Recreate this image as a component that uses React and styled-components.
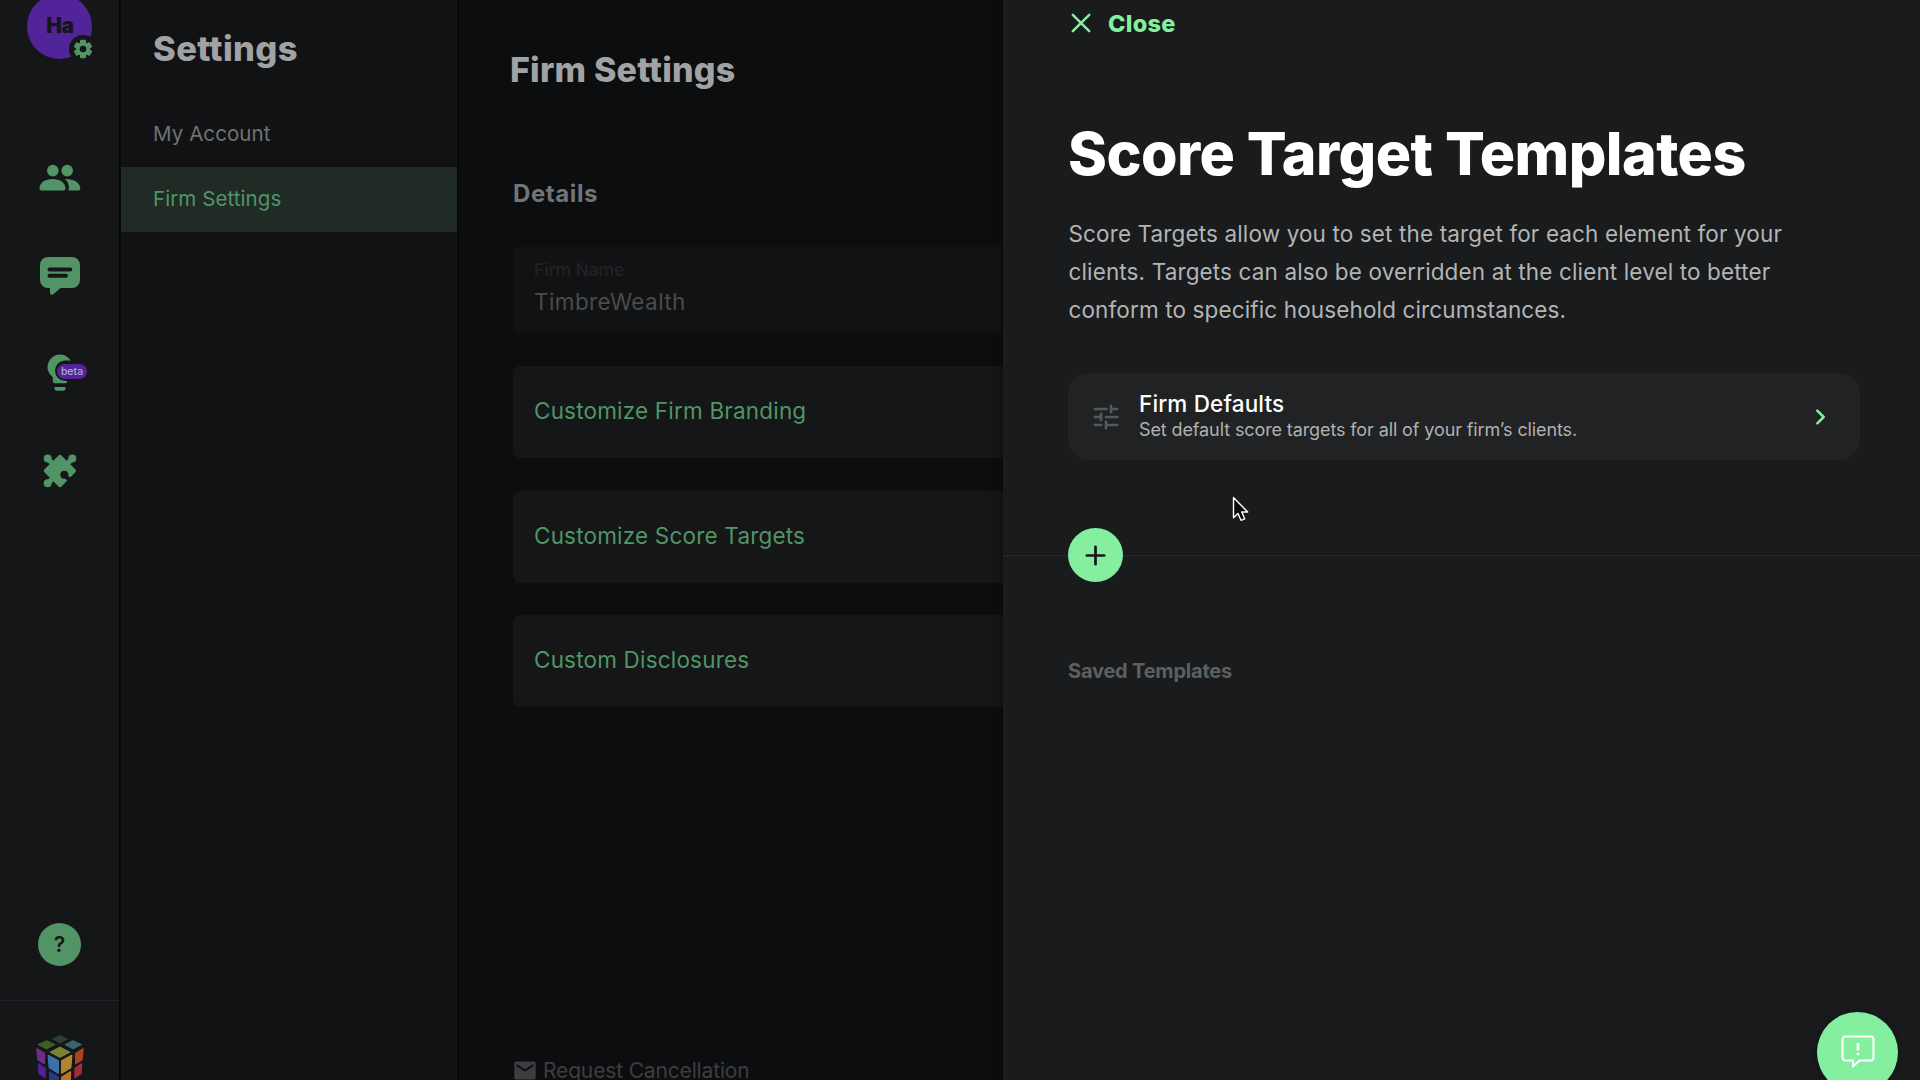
import React from "react";
import styled, { createGlobalStyle } from "styled-components";

const navLinks = [
  { label: "My Account", active: false },
  { label: "Firm Settings", active: true }
];

const firmOptions = [
  "Customize Firm Branding",
  "Customize Score Targets",
  "Custom Disclosures"
];

const gearTeeth = [0, 60, 120, 180, 240, 300];

const GearIcon = () => (
  <svg width="20" height="20" viewBox="0 0 20 20">
    <g fill="#529466">
      <circle cx="10" cy="10" r="7" />
      {gearTeeth.map(angle => (
        <rect key={angle} x="7" y="0.8" width="6" height="5" rx="1.2" transform={`rotate(${angle} 10 10)`} />
      ))}
    </g>
    <circle cx="10" cy="10" r="3.3" fill="#151618" />
  </svg>
);

const PeopleIcon = () => (
  <svg width="42" height="28" viewBox="0 0 42 28" fill="#529466">
    <circle cx="13.8" cy="6.6" r="5.8" />
    <circle cx="28.2" cy="6.6" r="5.8" />
    <path d="M0.5 24.5c0-6 5.5-9.6 13-9.6s13 3.6 13 9.6c0 1.3-.7 2-2 2h-22c-1.3 0-2-.7-2-2z" />
    <path d="M26 15c8-.4 15.3 3.2 15.3 9.5 0 1.3-.7 2-2 2h-10.2c.6-.6.8-1.2.8-2 0-4-1.2-7.2-3.9-9.5z" />
  </svg>
);

const ChatIcon = () => (
  <svg width="40" height="39" viewBox="0 -1 40 39">
    <path
      d="M8 0h24a8 8 0 0 1 8 8v15a8 8 0 0 1-8 8H20.5l-7.2 6.3c-1.3 1.1-3.3.4-3.3-1.5V31H8a8 8 0 0 1-8-8V8a8 8 0 0 1 8-8z"
      fill="#529466"
    />
    <path d="M9.5 12.5h20.8M9.5 18.7h16.5" stroke="#151618" strokeWidth="4" strokeLinecap="round" />
  </svg>
);

const BulbIcon = () => (
  <svg width="28" height="38" viewBox="0 0 28 38">
    <path
      d="M14 0.5a12.5 12.5 0 0 0-7.2 22.7v4a2 2 0 0 0 2 2h10.5a2 2 0 0 0 2-2v-4A12.5 12.5 0 0 0 14 0.5z"
      fill="#529466"
    />
    <path d="M8.5 33h11v1.3a2.5 2.5 0 0 1-2.5 2.5h-6a2.5 2.5 0 0 1-2.5-2.5z" fill="#529466" />
    <rect x="9" y="6.5" width="30" height="20.5" rx="10.2" fill="#151618" />
  </svg>
);

const PuzzleIcon = () => (
  <svg width="34" height="34" viewBox="0 0 34 34">
    <g fill="#529466">
      <path d="M15.6 1.4a2 2 0 0 1 2.8 0l13.7 13.7a2.5 2.5 0 0 1 0 3.5L18.7 32.2a2.5 2.5 0 0 1-3.5 0L1.7 18.6a2.5 2.5 0 0 1 0-3.5z" />
      <circle cx="4.7" cy="4.6" r="4" />
      <circle cx="29.3" cy="4.6" r="4" />
      <circle cx="4.7" cy="29.3" r="4" />
    </g>
    <path d="M5 5l6 6M29 5l-6 6M5 29l6-6" stroke="#529466" strokeWidth="5" />
    <circle cx="21.3" cy="20.8" r="4" fill="#151618" />
    <path d="M22.5 22l4.5 4.5" stroke="#151618" strokeWidth="4" />
  </svg>
);

const CubeIcon = () => (
  <svg width="50" height="52" viewBox="0 0 50 52" strokeWidth="1.5" strokeLinejoin="round">
    <path d="M25 1l7 3.2-7 3.5-7-3.5z" fill="#27422f" stroke="#27422f" />
    <path d="M12 6l7.5 3.6-8 3.9-8-3.9z" fill="#3c5e27" stroke="#3c5e27" />
    <path d="M38 6l8 3.6-8 3.9-7.5-3.9z" fill="#3d6270" stroke="#3d6270" />
    <path d="M25 12.5l9.5 4.7-9.5 5-9.5-5z" fill="#778330" stroke="#778330" />
    <path d="M2 14l7.3 4.5v10L3 24.5z" fill="#712d8a" stroke="#712d8a" />
    <path d="M13.3 20.5l10 5.5v12l-9-5.5z" fill="#3d70aa" stroke="#3d70aa" />
    <path d="M48 14l-7.3 4.5v10l6.3-4z" fill="#a8461e" stroke="#a8461e" />
    <path d="M36.7 20.5l-10 5.5v12l9-5.5z" fill="#b58431" stroke="#b58431" />
    <path d="M3.5 29l6.5 4.3v9.2l-6-4z" fill="#4e209b" stroke="#4e209b" />
    <path d="M46.5 29l-6.5 4.3v9.2l6-4z" fill="#a02d3a" stroke="#a02d3a" />
    <path d="M14.5 37l8.8 5.5V52h-8z" fill="#253a82" stroke="#253a82" />
    <path d="M35.5 37l-8.8 5.5V52h8z" fill="#b9752a" stroke="#b9752a" />
  </svg>
);

const MailIcon = () => (
  <svg width="22" height="19" viewBox="0 0 22 19">
    <rect x="0.3" y="0.5" width="21.4" height="18" rx="2" fill="#3d3e41" />
    <path d="M2.5 4l8.5 5.5L19.5 4" fill="none" stroke="#0c0d0f" strokeWidth="2" />
  </svg>
);

const CloseIcon = () => (
  <svg width="20" height="20" viewBox="0 0 20 20">
    <path d="M1.8 1.8l16.4 16.4M18.2 1.8L1.8 18.2" stroke="#83ef9f" strokeWidth="2.5" strokeLinecap="round" />
  </svg>
);

const TuneIcon = () => (
  <svg width="26" height="26" viewBox="0 0 26 26" fill="none" stroke="#56595b" strokeWidth="2.7" strokeLinecap="round">
    <path d="M2 5h11.5M18 1.8v6.4M18 5h6.3M2 13h5.5M8 9.8v6.4M13 13h11.3M2 21h6.3M13 17.8v6.4M13 21h11.3" />
  </svg>
);

const ChevronIcon = () => (
  <svg width="12" height="18" viewBox="0 0 12 18">
    <path d="M2.3 2.7L8.7 9l-6.4 6.3" fill="none" stroke="#83ef9f" strokeWidth="2.5" strokeLinecap="round" strokeLinejoin="round" />
  </svg>
);

const PlusIcon = () => (
  <svg width="21" height="21" viewBox="0 0 21 21">
    <path d="M10.5 1.8v17.4M1.8 10.5h17.4" stroke="#151618" strokeWidth="2.7" strokeLinecap="round" />
  </svg>
);

const FeedbackIcon = () => (
  <svg width="34" height="34" viewBox="0 0 34 34" stroke="#fff" strokeWidth="2" strokeLinejoin="round">
    <path d="M4.5 1.5h25a3 3 0 0 1 3 3v18a3 3 0 0 1-3 3H18.5l-6.5 6v-6H4.5a3 3 0 0 1-3-3v-18a3 3 0 0 1 3-3z" fill="none" />
    <path d="M17 8v7.5M17 17.8v2.4" fill="none" strokeWidth="2.7" />
  </svg>
);

const CursorIcon = () => (
  <svg width="18" height="28" viewBox="0 0 18 28">
    <path
      d="M1.5 1.5v20.3l4.5-4.3 3 6.8 3.7-1.5-3-6.8h6z"
      fill="#0a0a0a"
      stroke="#fff"
      strokeWidth="1.4"
      strokeLinejoin="round"
    />
  </svg>
);

export default function App() {
  return (
    <Page>
      <GlobalStyle />
      <Rail>
        <Avatar>
          Ha
          <AvatarGear>
            <GearIcon />
          </AvatarGear>
        </Avatar>
        <RailNav>
          <RailItem>
            <PeopleIcon />
          </RailItem>
          <RailItem>
            <ChatIcon />
          </RailItem>
          <RailItem>
            <BulbIcon />
            <BetaBadge>beta</BetaBadge>
          </RailItem>
          <RailItem>
            <PuzzleIcon />
          </RailItem>
        </RailNav>
        <HelpButton>?</HelpButton>
        <RailFooter>
          <CubeIcon />
        </RailFooter>
      </Rail>

      <Sidebar>
        <SidebarTitle>Settings</SidebarTitle>
        {navLinks.map(link => (
          <SidebarLink key={link.label} $active={link.active}>
            {link.label}
          </SidebarLink>
        ))}
      </Sidebar>

      <Main>
        <MainTitle>Firm Settings</MainTitle>
        <SectionTitle>Details</SectionTitle>
        <Options>
          <NameField>
            <FieldLabel>Firm Name</FieldLabel>
            <FieldValue>TimbreWealth</FieldValue>
          </NameField>
          {firmOptions.map(option => (
            <OptionCard key={option}>{option}</OptionCard>
          ))}
        </Options>
        <CancelLink>
          <MailIcon />
          Request Cancellation
        </CancelLink>
      </Main>

      <Drawer>
        <CloseButton>
          <CloseIcon />
          Close
        </CloseButton>
        <DrawerTitle>Score Target Templates</DrawerTitle>
        <Description>
          Score Targets allow you to set the target for each element for your
          <br />
          clients. Targets can also be overridden at the client level to better
          <br />
          conform to specific household circumstances.
        </Description>
        <DefaultsCard>
          <TuneIcon />
          <DefaultsText>
            <DefaultsTitle>Firm Defaults</DefaultsTitle>
            <DefaultsNote>Set default score targets for all of your firm’s clients.</DefaultsNote>
          </DefaultsText>
          <ChevronIcon />
        </DefaultsCard>
        <AddRow>
          <AddButton>
            <PlusIcon />
          </AddButton>
        </AddRow>
        <SavedTitle>Saved Templates</SavedTitle>
      </Drawer>

      <FeedbackButton>
        <FeedbackIcon />
      </FeedbackButton>
      <Cursor>
        <CursorIcon />
      </Cursor>
    </Page>
  );
}

const GlobalStyle = createGlobalStyle`
  * {
    box-sizing: border-box;
  }
  body {
    margin: 0;
    background: #0c0d0f;
    overflow: hidden;
    font-family: Inter, "Liberation Sans", sans-serif;
  }
  h1, h2, h3, p {
    margin: 0;
  }
  svg {
    display: block;
    flex-shrink: 0;
  }
  button {
    padding: 0;
    border: 0;
    background: none;
    font-family: inherit;
  }
`;

const Page = styled.div`
  position: relative;
  display: flex;
  width: 1920px;
  height: 1080px;
  overflow: hidden;
  white-space: nowrap;
`;

const Rail = styled.nav`
  display: flex;
  flex-direction: column;
  align-items: center;
  width: 121px;
  flex-shrink: 0;
  background: #151618;
  border-right: 2px solid #08090a;
`;

const Avatar = styled.div`
  position: relative;
  display: flex;
  align-items: center;
  justify-content: center;
  width: 65px;
  height: 65px;
  margin-top: -6px;
  flex-shrink: 0;
  border-radius: 50%;
  background: #52249a;
  color: #151618;
  font-size: 21px;
  font-weight: 900;
  letter-spacing: -0.3px;
  padding: 0 0 2px 1px;
`;

const AvatarGear = styled.div`
  position: absolute;
  left: 42px;
  top: 41px;
  display: flex;
  align-items: center;
  justify-content: center;
  width: 28px;
  height: 28px;
  border-radius: 50%;
  background: #151618;
`;

const RailNav = styled.div`
  display: flex;
  flex-direction: column;
  margin-top: 70px;
`;

const RailItem = styled.div`
  position: relative;
  display: flex;
  align-items: center;
  justify-content: center;
  width: 119px;
  height: 97.6px;
`;

const BetaBadge = styled.span`
  position: absolute;
  left: 57px;
  top: 40px;
  display: flex;
  align-items: center;
  justify-content: center;
  width: 30px;
  height: 15px;
  border-radius: 8px;
  background: #52249a;
  color: #b3aac0;
  font-size: 10.5px;
  font-weight: 500;
  line-height: 15px;
`;

const HelpButton = styled.button`
  width: 43px;
  height: 43px;
  margin-top: auto;
  border-radius: 50%;
  background: #529466;
  color: #151618;
  font-size: 21px;
  font-weight: 600;
`;

const RailFooter = styled.div`
  display: flex;
  justify-content: center;
  width: 100%;
  height: 80px;
  margin-top: 34.5px;
  padding-top: 34px;
  flex-shrink: 0;
  overflow: hidden;
  border-top: 1px solid #232427;
`;

const Sidebar = styled.aside`
  width: 338px;
  flex-shrink: 0;
  background: #111214;
  border-right: 2px solid #09090a;
`;

const SidebarTitle = styled.h2`
  height: 102px;
  padding: 29px 0 0 32px;
  color: #a1a2a3;
  font-size: 34.5px;
  font-weight: 800;
  line-height: 40px;
  letter-spacing: 0.35px;
`;

const SidebarLink = styled.div`
  height: 65px;
  padding-left: 32px;
  background: ${props => (props.$active ? "#1f2b24" : "transparent")};
  color: ${props => (props.$active ? "#529466" : "#707274")};
  font-size: 20.5px;
  line-height: 64px;
  letter-spacing: 0.08px;
`;

const Main = styled.main`
  display: flex;
  flex-direction: column;
  flex: 1;
  padding-left: 54px;
  background: #0c0d0f;
`;

const MainTitle = styled.h1`
  margin-top: 50px;
  margin-left: -3px;
  color: #a1a2a3;
  font-size: 34px;
  font-weight: 800;
  line-height: 40px;
  letter-spacing: 0.2px;
`;

const SectionTitle = styled.h3`
  margin-top: 89px;
  color: #717577;
  font-size: 24px;
  line-height: 30px;
  letter-spacing: 0.6px;
`;

// the cards run on under the drawer
const Options = styled.div`
  display: flex;
  flex-direction: column;
  gap: 32.8px;
  margin: 38px -40px 0 0;
`;

const NameField = styled.div`
  height: 86px;
  padding: 13px 20px 0 21px;
  border-radius: 7px;
  background: #111214;
`;

const FieldLabel = styled.div`
  color: #1f2123;
  font-size: 17.5px;
  font-weight: 600;
  line-height: 20px;
  letter-spacing: -0.15px;
`;

const FieldValue = styled.div`
  margin-top: 6px;
  color: #4a4b4c;
  font-size: 22.5px;
  line-height: 32px;
  letter-spacing: 0.4px;
`;

const OptionCard = styled.div`
  height: 92px;
  padding-left: 21px;
  border-radius: 7px;
  background: #141617;
  color: #529466;
  font-size: 22.5px;
  line-height: 90px;
  letter-spacing: 0.19px;
`;

const CancelLink = styled.div`
  display: flex;
  align-items: center;
  gap: 7px;
  margin-top: auto;
  height: 20px;
  padding-left: 1px;
  color: #3d3e41;
  font-size: 21px;
  letter-spacing: -0.15px;
`;

const Drawer = styled.section`
  position: relative;
  display: flex;
  flex-direction: column;
  width: 917px;
  flex-shrink: 0;
  padding: 0 60px 0 65px;
  background: #191b1d;
  box-shadow: 0 0 8px rgba(0, 0, 0, 0.5);
`;

const CloseButton = styled.button`
  display: flex;
  align-items: center;
  align-self: flex-start;
  gap: 17px;
  height: 30px;
  margin-top: 8px;
  padding-left: 3px;
  color: #83ef9f;
  font-size: 23.5px;
  font-weight: 800;
  letter-spacing: 0.25px;
`;

const DrawerTitle = styled.h1`
  margin-top: 81px;
  color: #fff;
  font-size: 59px;
  font-weight: 800;
  line-height: 70px;
  letter-spacing: -0.55px;
`;

const Description = styled.p`
  margin: 26px 0 0 0.5px;
  color: #b3b4b5;
  font-size: 22.5px;
  line-height: 38px;
  letter-spacing: 0.13px;
`;

const DefaultsCard = styled.div`
  display: flex;
  align-items: center;
  height: 87px;
  margin-top: 44px;
  padding: 0 33px 0 25px;
  border-radius: 20px;
  background: #202223;
`;

const DefaultsText = styled.div`
  flex: 1;
  padding-left: 20px;
`;

const DefaultsTitle = styled.div`
  color: #fff;
  font-size: 22.5px;
  font-weight: 500;
  line-height: 26px;
  letter-spacing: 0.15px;
`;

const DefaultsNote = styled.div`
  color: #b0b1b2;
  font-size: 18px;
  line-height: 25px;
  letter-spacing: -0.11px;
`;

const AddRow = styled.div`
  display: flex;
  align-items: center;
  height: 54px;
  margin: 68px -60px 0 -65px;
  padding-left: 65px;
  background: linear-gradient(#131416, #131416) 0 26px / 100% 1px no-repeat,
    linear-gradient(#2a2c2e, #2a2c2e) 0 27px / 100% 1px no-repeat;
`;

const AddButton = styled.button`
  display: flex;
  align-items: center;
  justify-content: center;
  width: 55px;
  height: 54px;
  border-radius: 50%;
  background: #83ef9f;
`;

const SavedTitle = styled.h3`
  margin-top: 75px;
  color: #5c6062;
  font-size: 20px;
  line-height: 28px;
  letter-spacing: -0.2px;
`;

const FeedbackButton = styled.button`
  position: absolute;
  left: 1817px;
  top: 1012px;
  display: flex;
  justify-content: center;
  width: 81px;
  height: 81px;
  padding-top: 23px;
  border-radius: 50%;
  background: #83ef9f;
  box-shadow: 0 2px 12px rgba(0, 0, 0, 0.35);
`;

const Cursor = styled.div`
  position: absolute;
  left: 1232px;
  top: 496px;
`;
